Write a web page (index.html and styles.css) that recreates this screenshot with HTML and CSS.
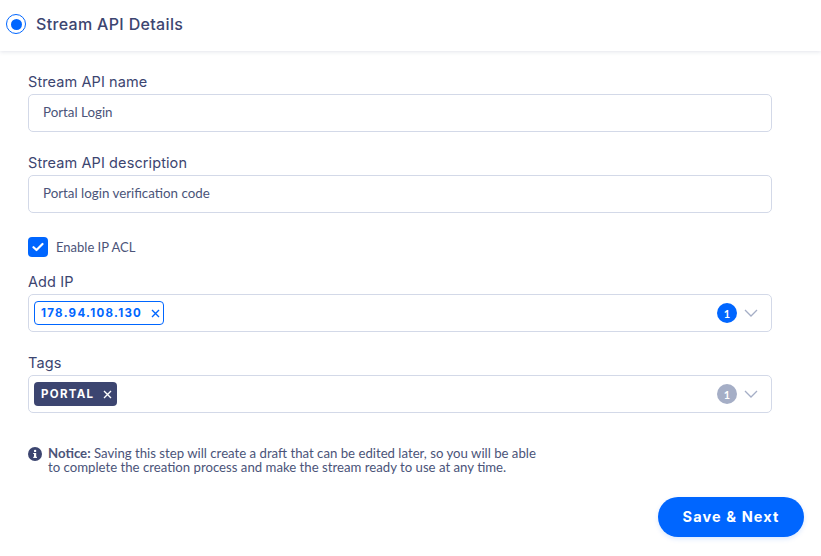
FILE: index.html
```html
<!DOCTYPE html>
<html lang="en">
<head>
  <meta charset="UTF-8" />
  <title>Stream API Details</title>
  <link rel="stylesheet" href="styles.css">
</head>
<body>
  <header class="step-header">
    <span class="step-radio"><span class="step-dot"></span></span>
    <h2 class="step-title">Stream API Details</h2>
  </header>

  <main class="form">
    <div class="field">
      <label class="field-label">Stream API name</label>
      <div class="input">Portal Login</div>
    </div>

    <div class="field">
      <label class="field-label">Stream API description</label>
      <div class="input">Portal login verification code</div>
    </div>

    <div class="check-row">
      <span class="checkbox">
        <svg width="12" height="10" viewBox="0 0 12 10"><path d="M1.5 5.2 4.5 8 10.5 2" fill="none" stroke="#fff" stroke-width="2.2" stroke-linecap="round" stroke-linejoin="round"/></svg>
      </span>
      <span class="check-label">Enable IP ACL</span>
    </div>

    <div class="field field-ip">
      <label class="field-label">Add IP</label>
      <div class="select">
        <span class="chip chip-outline">178.94.108.130
          <svg class="chip-x" width="9" height="9" viewBox="0 0 9 9"><path d="M1 1 8 8M8 1 1 8" stroke="currentColor" stroke-width="1.4"/></svg>
        </span>
        <span class="count">1</span>
        <svg class="chevron" width="14" height="8" viewBox="0 0 14 8"><path d="M1 1 7 7 13 1" fill="none" stroke="#a5aec6" stroke-width="1.3"/></svg>
      </div>
    </div>

    <div class="field">
      <label class="field-label">Tags</label>
      <div class="select">
        <span class="chip chip-solid">PORTAL
          <svg class="chip-x" width="9" height="9" viewBox="0 0 9 9"><path d="M1 1 8 8M8 1 1 8" stroke="currentColor" stroke-width="1.4"/></svg>
        </span>
        <span class="count count-muted">1</span>
        <svg class="chevron" width="14" height="8" viewBox="0 0 14 8"><path d="M1 1 7 7 13 1" fill="none" stroke="#a5aec6" stroke-width="1.3"/></svg>
      </div>
    </div>

    <div class="notice">
      <svg class="notice-icon" width="14" height="14" viewBox="0 0 14 14"><circle cx="7" cy="7" r="7" fill="#3c4570"/><rect x="6" y="6" width="2.2" height="4.6" fill="#fff"/><rect x="5.2" y="9.8" width="3.8" height="1.1" fill="#fff"/><rect x="5.2" y="6" width="2" height="1" fill="#fff"/><circle cx="7.1" cy="3.9" r="1.2" fill="#fff"/></svg>
      <p class="notice-text"><b>Notice:</b> Saving this step will create a draft that can be edited later, so you will be able<br>to complete the creation process and make the stream ready to use at any time.</p>
    </div>

    <div class="actions">
      <button class="btn-primary">Save &amp; Next</button>
    </div>
  </main>
</body>
</html>
```

FILE: styles.css
```css
* {
  box-sizing: border-box;
}

body {
  margin: 0;
  background: #fff;
  color: #3c4570;
  font-family: Lato, sans-serif;
  height: 556px;
  overflow: hidden;
}

.step-header {
  height: 51px;
  padding: 0 0 3px 6px;
  display: flex;
  align-items: center;
  gap: 10px;
  box-shadow: 0 1px 4px rgba(60, 69, 112, 0.14);
}

.step-radio {
  width: 20px;
  height: 20px;
  border: 1.5px solid #0066ff;
  border-radius: 50%;
  display: flex;
  align-items: center;
  justify-content: center;
}

.step-dot {
  width: 11px;
  height: 11px;
  background: #0066ff;
  border-radius: 50%;
}

.step-title {
  margin: 0;
  font-family: Inter, sans-serif;
  font-size: 16px;
  font-weight: 500;
  letter-spacing: 0.33px;
}

.form {
  padding: 20px 49px 0 28px;
}

.field {
  margin-bottom: 20px;
}

.field-label {
  display: block;
  font-family: Inter, sans-serif;
  font-size: 14.5px;
  letter-spacing: 0.1px;
  line-height: 21px;
  margin-bottom: 2px;
}

.input,
.select {
  height: 38px;
  border: 1px solid #d3d9e8;
  border-radius: 5px;
  display: flex;
  align-items: center;
}

.input {
  padding: 0 0 2px 14px;
  font-size: 13.35px;
  color: #4b5479;
}

.select {
  padding: 0 13px 0 5px;
}

.check-row {
  display: flex;
  align-items: center;
  gap: 8px;
  margin: 24px 0 14px;
}

.checkbox {
  width: 20px;
  height: 20px;
  background: #0066ff;
  border-radius: 4px;
  display: flex;
  align-items: center;
  justify-content: center;
}

.check-label {
  font-size: 13px;
  color: #4b5479;
}

.chip {
  height: 24px;
  padding: 0 5px 0 7px;
  border-radius: 4px;
  display: flex;
  align-items: center;
  gap: 9px;
  font-family: Inter, sans-serif;
  font-size: 11.5px;
  font-weight: 700;
  letter-spacing: 1.3px;
}

.chip-outline {
  padding: 0 3px 0 6px;
  border: 1px solid #0066ff;
  color: #0066ff;
}

.chip-solid {
  background: #3c4570;
  color: #fff;
}

.chip-x {
  flex: none;
}

.count {
  margin-left: auto;
  width: 20px;
  height: 20px;
  background: #0066ff;
  border-radius: 50%;
  color: #fff;
  font-size: 11px;
  font-weight: 700;
  display: flex;
  align-items: center;
  justify-content: center;
}

.count-muted {
  background: #a5aec6;
}

.chevron {
  margin-left: 7px;
}

.notice {
  display: flex;
  gap: 6px;
  margin-top: 33px;
}

.notice-icon {
  flex: none;
  margin-top: 1px;
}

.notice-text {
  margin: 0;
  font-size: 13.2px;
  line-height: 14px;
  color: #4b5479;
}

.actions {
  margin-top: 23px;
  margin-right: -32px;
  display: flex;
  justify-content: flex-end;
}

.btn-primary {
  width: 146px;
  height: 40px;
  padding: 0 0 2px;
  border: 0;
  border-radius: 20px;
  background: #0066ff;
  color: #fff;
  font-family: Inter, sans-serif;
  font-size: 14.5px;
  font-weight: 700;
  letter-spacing: 1.1px;
  box-shadow: 0 2px 5px rgba(0, 102, 255, 0.15);
}
```
